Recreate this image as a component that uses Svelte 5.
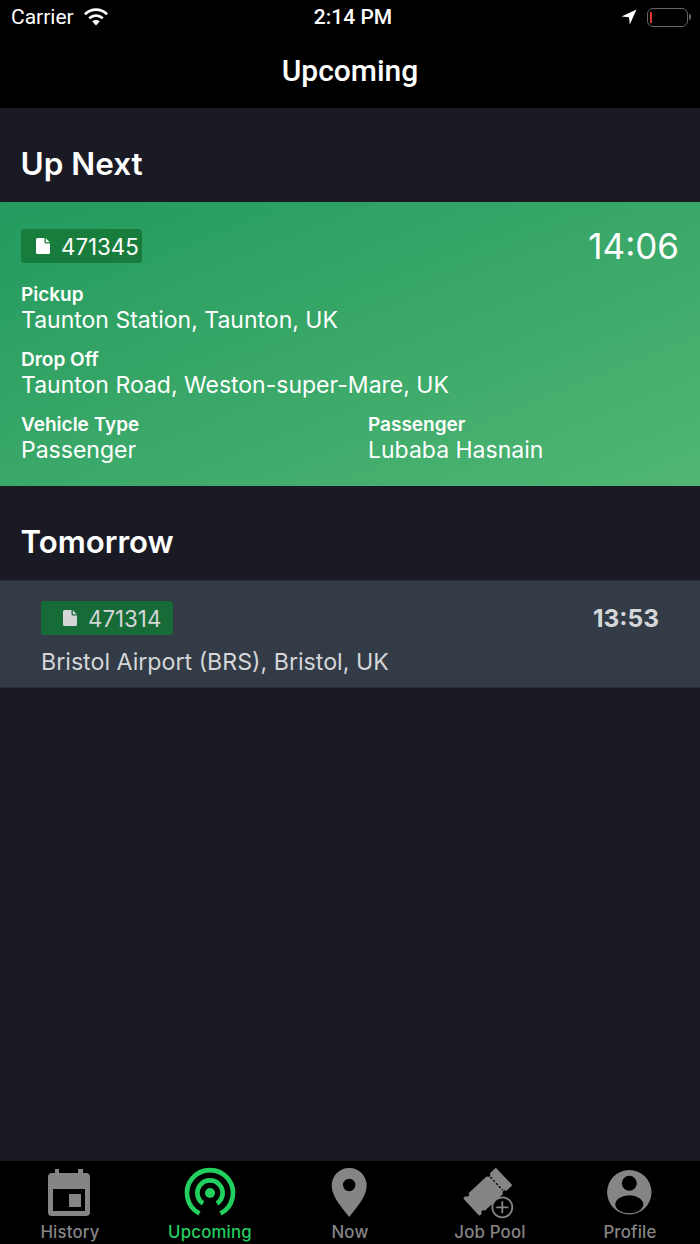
<script>
	const tabs = [
		{ label: 'History', icon: 'history' },
		{ label: 'Upcoming', icon: 'upcoming', active: true },
		{ label: 'Now', icon: 'now' },
		{ label: 'Job Pool', icon: 'pool' },
		{ label: 'Profile', icon: 'profile' }
	];
</script>

{#snippet doc()}
	<svg class="doc" viewBox="0 0 14 16" width="14" height="16">
		<path d="M1.5 0H8.5V4.2Q8.5 5.5 9.8 5.5H14V14.5Q14 16 12.5 16H1.5Q0 16 0 14.5V1.5Q0 0 1.5 0ZM9.8 0.2L13.8 4.2H10.3Q9.8 4.2 9.8 3.7Z" fill="currentColor" />
	</svg>
{/snippet}

<div class="page">
	<header class="top">
		<div class="status">
			<div class="status-left">
				<span>Carrier</span>
				<svg viewBox="0 0 24 18" width="24" height="18">
					<path d="M1 6.2C7.5 0.2 16.5 0.2 23 6.2" fill="none" stroke="#fff" stroke-width="2.7" />
					<path d="M5.2 10.2C9.4 6.600 14.6 6.600 18.8 10.2" fill="none" stroke="#fff" stroke-width="2.7" />
					<path d="M12 17.5L8.2 13.3C10.4 11.6 13.6 11.6 15.8 13.3Z" fill="#fff" />
				</svg>
			</div>
			<span class="clock">2:14 PM</span>
			<div class="status-right">
				<svg viewBox="0 0 16 16" width="16" height="16">
					<path d="M15.5 0.5L0.5 7.5L8 8.2L8.8 15.5Z" fill="#fff" />
				</svg>
				<div class="battery"><i></i></div>
				<div class="nub"></div>
			</div>
		</div>
		<h1>Upcoming</h1>
	</header>

	<main>
		<h2>Up Next</h2>
		<section class="next">
			<div class="next-head">
				<div class="badge badge-lg">{@render doc()}<span>471345</span></div>
				<div class="next-time">14:06</div>
			</div>
			<div class="field">
				<strong>Pickup</strong>
				<span>Taunton Station, Taunton, UK</span>
			</div>
			<div class="field">
				<strong>Drop Off</strong>
				<span>Taunton Road, Weston-super-Mare, UK</span>
			</div>
			<div class="field-row">
				<div class="field">
					<strong>Vehicle Type</strong>
					<span>Passenger</span>
				</div>
				<div class="field">
					<strong>Passenger</strong>
					<span>Lubaba Hasnain</span>
				</div>
			</div>
		</section>

		<h2 class="second">Tomorrow</h2>
		<section class="later">
			<div class="later-head">
				<div class="badge badge-sm">{@render doc()}<span>471314</span></div>
				<div class="later-time">13:53</div>
			</div>
			<div class="later-place">Bristol Airport (BRS), Bristol, UK</div>
		</section>
	</main>

	<nav class="tabs">
		{#each tabs as tab}
			<div class="tab" class:active={tab.active}>
				<svg viewBox="0 0 60 56" width="60" height="56">
					{#if tab.icon === 'history'}
						<path fill-rule="evenodd" d="M15 3H19V7H38V3H43V7H46Q50 7 50 11V46Q50 50 46 50H12Q8 50 8 46V11Q8 7 12 7H15ZM13 23V45H45V23Z" fill="currentColor" />
						<rect x="29" y="28" width="12" height="13" fill="currentColor" />
					{:else if tab.icon === 'upcoming'}
						<g fill="none" stroke="currentColor" stroke-width="4.7">
							<path d="M19.5 47.5A23 23 0 1 1 40.5 47.5" />
							<path d="M23 37.5A12.6 12.6 0 1 1 37 37.5" />
						</g>
						<circle cx="30" cy="27" r="5" fill="currentColor" />
					{:else if tab.icon === 'now'}
						<path fill-rule="evenodd" d="M29.2 2C38.9 2 46.7 9.8 46.7 19.5C46.7 31 36 42 29.2 51C22.4 42 11.7 31 11.7 19.5C11.7 9.8 19.5 2 29.2 2ZM29.2 12.8A6.2 6.2 0 1 1 29.2 25.2A6.2 6.2 0 1 1 29.2 12.8Z" fill="currentColor" />
					{:else if tab.icon === 'pool'}
						<g transform="translate(27.7 25.8) rotate(-43)">
							<path d="M-21.5 -12H-19A2 2 0 0 0 -15 -12H10A2 2 0 0 0 14 -12H21.5Q22.5 -12 22.5 -11V11Q22.5 12 21.5 12H14A2 2 0 0 0 10 12H-15A2 2 0 0 0 -19 12H-21.5Q-22.5 12 -22.5 11V-11Q-22.5 -12 -21.5 -12Z" fill="currentColor" />
							<path d="M12 -9V9" stroke="#000" stroke-width="1.3" stroke-dasharray="2.4 1.8" />
						</g>
						<circle cx="42.3" cy="41.3" r="10" fill="#000" stroke="currentColor" stroke-width="1.8" />
						<path d="M42.3 35.300V47.300M36.300 41.300H48.300" stroke="currentColor" stroke-width="1.8" />
					{:else}
						<circle cx="29.3" cy="26.3" r="22.2" fill="currentColor" />
						<circle cx="29.3" cy="17.3" r="7.5" fill="#000" />
						<ellipse cx="29.3" cy="38.3" rx="14" ry="9" fill="#000" />
					{/if}
				</svg>
				<span>{tab.label}</span>
			</div>
		{/each}
	</nav>
</div>

<style>
	:global(body) {
		margin: 0;
		background: #191a24;
	}

	.page {
		width: 700px;
		height: 1244px;
		display: flex;
		flex-direction: column;
		background: #191a24;
		color: #fff;
		font-family: Inter, 'Liberation Sans', sans-serif;
		overflow: hidden;
	}

	.top {
		height: 108px;
		background: #000;
		flex-shrink: 0;
	}

	.status {
		height: 34px;
		display: grid;
		grid-template-columns: 1fr auto 1fr;
		align-items: center;
		padding: 0 9px 0 11px;
		font-size: 21px;
		font-family: Roboto, sans-serif;
	}

	.status-left {
		display: flex;
		align-items: center;
		gap: 10px;
	}

	.status-right {
		display: flex;
		align-items: center;
		justify-content: flex-end;
	}

	.status-right svg {
		margin-right: 10px;
	}

	.clock {
		font-weight: 500;
		padding-left: 4px;
	}

	.battery {
		width: 41px;
		height: 19px;
		border: 1.5px solid #666;
		border-radius: 6px;
		padding: 3px 2px;
		box-sizing: border-box;
	}

	.battery i {
		display: block;
		width: 2px;
		height: 100%;
		background: #e0352b;
	}

	.nub {
		width: 2px;
		height: 6px;
		background: #666;
		margin-left: 1px;
		border-radius: 0 2px 2px 0;
	}

	h1 {
		margin: 0;
		height: 74px;
		line-height: 74px;
		text-align: center;
		font-family: Roboto, sans-serif;
		font-size: 30px;
		font-weight: 500;
	}

	main {
		flex: 1;
	}

	h2 {
		margin: 0;
		height: 94px;
		line-height: 112px;
		padding-left: 20.5px;
		font-size: 31.5px;
		font-weight: 600;
		box-sizing: border-box;
	}

	h2.second {
		font-size: 31.2px;
		line-height: 113px;
	}

	.next {
		height: 284px;
		box-sizing: border-box;
		padding: 27px 21px 0;
		background: linear-gradient(to bottom right, #239a5e 0%, #50b673 100%);
	}

	.next-head {
		display: flex;
		justify-content: space-between;
		align-items: center;
		height: 34px;
		margin-bottom: 20px;
	}

	.next-time {
		font-size: 35px;
		font-weight: 400;
	}

	.badge {
		display: flex;
		align-items: center;
		border-radius: 3px;
		box-sizing: border-box;
	}

	.badge-lg {
		width: 121px;
		height: 34px;
		padding-left: 15px;
		gap: 11px;
		background: #187c3c;
		font-size: 22.3px;
	}

	.badge-sm {
		width: 132px;
		height: 34px;
		padding-left: 22px;
		gap: 11px;
		background: #176b37;
		color: #d4d6d8;
		font-size: 22.3px;
	}

	.field {
		margin-bottom: 13px;
	}

	.field strong {
		display: block;
		font-size: 19px;
		font-weight: 600;
		line-height: 23px;
	}

	.field span {
		display: block;
		font-size: 23px;
		line-height: 29px;
	}

	.field-row {
		display: grid;
		grid-template-columns: 347px 1fr;
	}

	.later {
		height: 108px;
		box-sizing: border-box;
		padding: 20px 41px 0;
		background: #323b46;
		border-top: 1px solid #282e39;
		border-bottom: 1px solid #282e39;
	}

	.later-head {
		display: flex;
		justify-content: space-between;
		align-items: center;
	}

	.later-time {
		font-size: 24.5px;
		font-weight: 700;
		color: #d4d6d8;
	}

	.later-place {
		margin-top: 12px;
		font-size: 23.2px;
		line-height: 30px;
		color: #d4d6d8;
	}

	.tabs {
		height: 83px;
		flex-shrink: 0;
		background: #000;
		display: grid;
		grid-template-columns: repeat(5, 140px);
	}

	.tab {
		display: flex;
		flex-direction: column;
		align-items: center;
		color: #858585;
		padding-top: 5px;
		box-sizing: border-box;
	}

	.tab svg {
		display: block;
	}

	.tab span {
		margin-top: -1px;
		font-size: 16.8px;
		font-weight: 500;
		letter-spacing: 0.2px;
		line-height: 22px;
	}

	.tab.active {
		color: #21d05f;
	}
</style>
